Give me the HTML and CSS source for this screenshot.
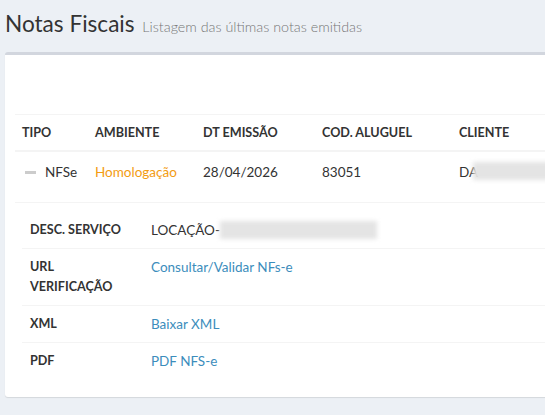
FILE: index.html
```html
<!DOCTYPE html>
<html>
<head>
<meta charset="utf-8">
<link rel="stylesheet" href="styles.css">
</head>
<body>
<div class="header">
  <h1>Notas Fiscais <small>Listagem das últimas notas emitidas</small></h1>
</div>
<div class="box">
  <div class="spacer"></div>
  <table class="main">
    <colgroup>
      <col class="c1"><col class="c2"><col class="c3"><col class="c4"><col class="c5">
    </colgroup>
    <thead>
      <tr>
        <th>TIPO</th>
        <th>AMBIENTE</th>
        <th>DT EMISSÃO</th>
        <th>COD. ALUGUEL</th>
        <th>CLIENTE</th>
      </tr>
    </thead>
    <tbody>
      <tr class="row">
        <td><span class="minus"></span>NFSe</td>
        <td class="warn">Homologação</td>
        <td>28/04/2026</td>
        <td>83051</td>
        <td><span class="client">DA</span><span class="blur blur-client"></span></td>
      </tr>
      <tr class="detail-row">
        <td colspan="5">
          <table class="detail">
            <colgroup><col class="dl"><col class="dv"></colgroup>
            <tr>
              <th>DESC. SERVIÇO</th>
              <td><span>LOCAÇÃO-</span><span class="blur blur-desc"></span></td>
            </tr>
            <tr>
              <th>URL<br>VERIFICAÇÃO</th>
              <td><a href="#">Consultar/Validar NFs-e</a></td>
            </tr>
            <tr>
              <th>XML</th>
              <td><a href="#">Baixar XML</a></td>
            </tr>
            <tr>
              <th>PDF</th>
              <td><a href="#">PDF NFS-e</a></td>
            </tr>
          </table>
        </td>
      </tr>
    </tbody>
  </table>
</div>
</body>
</html>
```
FILE: styles.css
```css
html, body {
  margin: 0;
  padding: 0;
  background: #ecf0f5;
  font-family: "Lato", "Liberation Sans", sans-serif;
  color: #333;
  overflow: hidden;
  width: 545px;
  height: 415px;
}
.header {
  padding: 10px 5px 0 5px;
  height: 42px;
  box-sizing: border-box;
}
.header h1 {
  margin: 0;
  font-size: 22.6px;
  font-weight: 400;
  line-height: 28px;
  color: #333;
  white-space: nowrap;
}
.header small {
  font-size: 14.3px;
  color: #777;
  font-weight: 300;
  padding-left: 2px;
}
.box {
  margin: 10px 0 0 5px;
  width: 600px;
  height: 345px;
  box-sizing: border-box;
  background: #fff;
  border-top: 3px solid #d2d6de;
  border-radius: 3px;
  box-shadow: 0 1px 1px rgba(0,0,0,0.1);
  padding: 0 0 0 10px;
}
.spacer {
  height: 59px;
}
table {
  border-collapse: collapse;
  border-spacing: 0;
}
.main {
  width: 590px;
  table-layout: fixed;
  font-size: 13.5px;
}
.c1 { width: 73px; }
.c2 { width: 108px; }
.c3 { width: 119px; }
.c4 { width: 137px; }
.c5 { width: 153px; }
.main th, .main td {
  text-align: left;
  padding: 0 7px;
  white-space: nowrap;
  overflow: visible;
}
.main thead th {
  font-weight: 700;
  font-size: 12.6px;
  height: 36px;
  border-top: 1px solid #f4f4f4;
  border-bottom: 2px solid #f4f4f4;
  box-sizing: border-box;
  vertical-align: middle;
}
.row td {
  height: 52px;
  vertical-align: top;
  padding-top: 11px;
  box-sizing: border-box;
  border-bottom: 1px solid #f4f4f4;
  line-height: 18px;
}
.minus {
  display: inline-block;
  width: 11px;
  height: 3px;
  background: #ccc;
  margin: 0 9px 0 3px;
  vertical-align: middle;
  position: relative;
  top: -1px;
}
.warn { color: #f39c12; }
.client { vertical-align: top; }
.blur {
  display: inline-block;
  background: #e4e4e4;
  filter: blur(2px);
  vertical-align: top;
}
.blur-client {
  width: 90px;
  height: 18px;
  margin-left: -5px;
  margin-top: -1px;
}
.blur-desc {
  width: 157px;
  height: 18px;
  margin-left: 0;
  margin-top: 1px;
}
.detail-row td {
  padding: 9px 0 0 7px;
}
.detail {
  width: 580px;
  table-layout: fixed;
  font-size: 13.5px;
}
.dl { width: 121px; }
.dv { width: 459px; }
.detail th, .detail td {
  text-align: left;
  vertical-align: top;
  padding: 8px 8px;
  line-height: 20px;
  border-top: 1px solid #f4f4f4;
}
.detail tr:first-child th, .detail tr:first-child td {
  border-top: none;
}
.detail th {
  font-weight: 700;
  font-size: 12.6px;
}
a {
  color: #3c8dbc;
  text-decoration: none;
}
```
